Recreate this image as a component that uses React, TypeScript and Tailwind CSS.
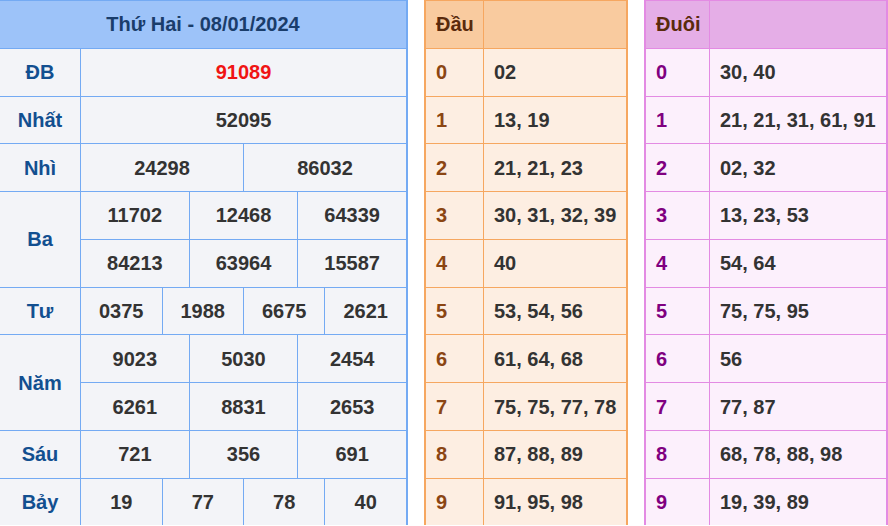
import React from 'react';

const font = { fontFamily: '"Liberation Sans", Arial, sans-serif' };

type Cell = { v: string; span: number; red?: boolean };
type Row = { label: string; rows: Cell[][] };

const prizes: Row[] = [
  { label: 'ĐB', rows: [[{ v: '91089', span: 12, red: true }]] },
  { label: 'Nhất', rows: [[{ v: '52095', span: 12 }]] },
  { label: 'Nhì', rows: [[{ v: '24298', span: 6 }, { v: '86032', span: 6 }]] },
  {
    label: 'Ba',
    rows: [
      [{ v: '11702', span: 4 }, { v: '12468', span: 4 }, { v: '64339', span: 4 }],
      [{ v: '84213', span: 4 }, { v: '63964', span: 4 }, { v: '15587', span: 4 }],
    ],
  },
  {
    label: 'Tư',
    rows: [[{ v: '0375', span: 3 }, { v: '1988', span: 3 }, { v: '6675', span: 3 }, { v: '2621', span: 3 }]],
  },
  {
    label: 'Năm',
    rows: [
      [{ v: '9023', span: 4 }, { v: '5030', span: 4 }, { v: '2454', span: 4 }],
      [{ v: '6261', span: 4 }, { v: '8831', span: 4 }, { v: '2653', span: 4 }],
    ],
  },
  { label: 'Sáu', rows: [[{ v: '721', span: 4 }, { v: '356', span: 4 }, { v: '691', span: 4 }]] },
  {
    label: 'Bảy',
    rows: [[{ v: '19', span: 3 }, { v: '77', span: 3 }, { v: '78', span: 3 }, { v: '40', span: 3 }]],
  },
];

const spanClass: Record<number, string> = {
  3: 'col-span-3',
  4: 'col-span-4',
  6: 'col-span-6',
  12: 'col-span-12',
};

const dau = ['02', '13, 19', '21, 21, 23', '30, 31, 32, 39', '40', '53, 54, 56', '61, 64, 68', '75, 75, 77, 78', '87, 88, 89', '91, 95, 98'];
const duoi = ['30, 40', '21, 21, 31, 61, 91', '02, 32', '13, 23, 53', '54, 64', '75, 75, 95', '56', '77, 87', '68, 78, 88, 98', '19, 39, 89'];

function Results() {
  let r = 2;
  const cells: React.ReactNode[] = [];
  prizes.forEach((p, i) => {
    const n = p.rows.length;
    cells.push(
      <div
        key={'l' + i}
        className="bg-[#f3f4f8] flex items-center justify-center text-[#124f90]"
        style={{ gridColumn: '1', gridRow: `${r} / span ${n}` }}
      >
        {p.label}
      </div>
    );
    p.rows.forEach((row, j) => {
      row.forEach((c, k) => {
        cells.push(
          <div
            key={`c${i}-${j}-${k}`}
            className={`bg-[#f3f4f8] flex items-center justify-center ${spanClass[c.span]} ${c.red ? 'text-[#f01414]' : 'text-[#333333]'}`}
            style={{ gridRow: `${r + j}` }}
          >
            {c.v}
          </div>
        );
      });
    });
    r += n;
  });
  return (
    <div className="w-[408px] shrink-0 bg-[#74aaf3] pt-px pr-[2px] grid grid-cols-[80px_repeat(12,minmax(0,1fr))] auto-rows-[46.78px] gap-px font-bold text-[20px]">
      <div className="bg-[#9dc3f9] flex items-center justify-center text-[#1a3d6b]" style={{ gridColumn: '1 / -1' }}>
        Thứ Hai - 08/01/2024
      </div>
      {cells}
    </div>
  );
}

function Loto({
  title,
  data,
  width,
  firstCol,
  frame,
  head,
  body,
  digit,
}: {
  title: string;
  data: string[];
  width: string;
  firstCol: string;
  frame: string;
  head: string;
  body: string;
  digit: string;
}) {
  return (
    <div className={`${width} shrink-0 ${frame} pt-px px-[2px] grid ${firstCol} auto-rows-[46.78px] gap-px font-bold text-[20px]`}>
      <div className={`${head} flex items-center px-2.5 text-[#5a2a0c]`}>{title}</div>
      <div className={head}></div>
      {data.map((d, i) => (
        <React.Fragment key={i}>
          <div className={`${body} flex items-center px-2.5 ${digit}`}>{i}</div>
          <div className={`${body} flex items-center px-2.5 text-[#333333] whitespace-nowrap`}>{d}</div>
        </React.Fragment>
      ))}
    </div>
  );
}

export default function App() {
  return (
    <div className="flex items-start gap-4 bg-white w-[888px]" style={font}>
      <Results />
      <Loto
        title="Đầu"
        data={dau}
        width="w-[204px]"
        firstCol="grid-cols-[57px_minmax(0,1fr)]"
        frame="bg-[#f6a760]"
        head="bg-[#f9cb9f]"
        body="bg-[#fdeee2]"
        digit="text-[#8b4513]"
      />
      <Loto
        title="Đuôi"
        data={duoi}
        width="w-[244px]"
        firstCol="grid-cols-[63px_minmax(0,1fr)]"
        frame="bg-[#e38be3]"
        head="bg-[#e5aee7]"
        body="bg-[#fcf0fc]"
        digit="text-[#800080]"
      />
    </div>
  );
}
